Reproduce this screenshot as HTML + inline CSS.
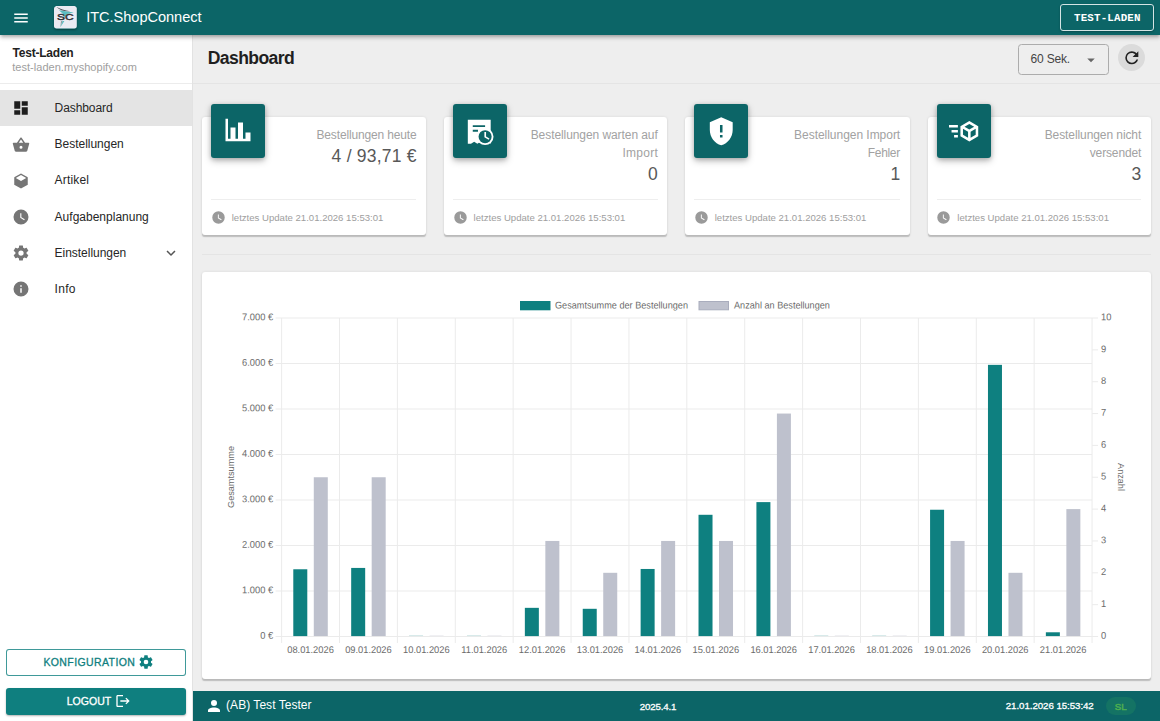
<!DOCTYPE html>
<html lang="de"><head><meta charset="utf-8"><title>ITC.ShopConnect - Dashboard</title>
<style>
html,body{margin:0;padding:0}
body{width:1160px;height:721px;overflow:hidden;position:relative;background:#eeeeee;font-family:"Liberation Sans",sans-serif;}
.abs{position:absolute}
.t{position:absolute;white-space:nowrap}
.ic{position:absolute;display:block}
.card{position:absolute;background:#fff;border-radius:3px;box-shadow:0 1.5px 1px -0.2px rgba(0,0,0,.17),0 0.5px 3px rgba(0,0,0,.09)}
.ibox{position:absolute;width:54px;height:54px;border-radius:3px;background:#0c6567;box-shadow:0 3px 7px rgba(0,0,0,.26),0 1px 4px rgba(0,0,0,.16)}
</style></head><body>

<div class="abs" id="sidebar" style="left:0;top:35px;width:192px;height:686px;background:#fff;box-shadow:1px 0 0 #e2e2e2"></div>
<div class="t" style="left:12.50px;top:45px;font-size:12px;line-height:17px;color:#222;font-weight:700;letter-spacing:-0.215px;">Test-Laden</div>
<div class="t" style="left:12.25px;top:60px;font-size:11px;line-height:15px;color:#9e9e9e;letter-spacing:0.030px;">test-laden.myshopify.com</div>
<div class="abs" style="left:0;top:83px;width:192px;height:1px;background:#ececec"></div>
<div class="abs" style="left:0;top:90px;width:192px;height:36px;background:#e4e4e4"></div>
<svg class="ic" style="left:12px;top:99.3px;width:18px;height:18px;" viewBox="0 0 24 24"><path fill="#1e1e1e" fill-rule="evenodd" d="M13,3V9H21V3M13,21H21V11H13M3,21H11V15H3M3,13H11V3H3V13Z"/></svg>
<div class="t" style="left:54.60px;top:100px;font-size:12px;line-height:17px;color:#262626;letter-spacing:-0.084px;">Dashboard</div>
<svg class="ic" style="left:12px;top:135.5px;width:18px;height:18px;" viewBox="0 0 24 24"><path fill="#757575" fill-rule="evenodd" d="M5.5,21C4.72,21 4.04,20.55 3.71,19.9V19.9L1.1,10.44L1,10A1,1 0 0,1 2,9H6.58L11.18,2.43C11.36,2.17 11.66,2 12,2C12.34,2 12.65,2.17 12.83,2.44L17.42,9H22A1,1 0 0,1 23,10L22.96,10.29L20.29,19.9C19.96,20.55 19.28,21 18.5,21H5.5M12,4.74L9,9H15L12,4.74M12,13A2,2 0 0,0 10,15A2,2 0 0,0 12,17A2,2 0 0,0 14,15A2,2 0 0,0 12,13Z"/></svg>
<div class="t" style="left:54.60px;top:136px;font-size:12px;line-height:17px;color:#262626;letter-spacing:-0.023px;">Bestellungen</div>
<svg class="ic" style="left:12px;top:171.7px;width:18px;height:18px;" viewBox="0 0 24 24"><path fill="#757575" fill-rule="evenodd" d="M21,16.5C21,16.88 20.79,17.21 20.47,17.38L12.57,21.82C12.41,21.94 12.21,22 12,22C11.79,22 11.59,21.94 11.43,21.82L3.53,17.38C3.21,17.21 3,16.88 3,16.5V7.5C3,7.12 3.21,6.79 3.53,6.62L11.43,2.18C11.59,2.06 11.79,2 12,2C12.21,2 12.41,2.06 12.57,2.18L20.47,6.62C20.79,6.79 21,7.12 21,7.5V16.5M12,4.15L5.04,8.07L12,11.99L18.96,8.07L12,4.15Z"/></svg>
<div class="t" style="left:54.60px;top:172px;font-size:12px;line-height:17px;color:#262626;letter-spacing:0.158px;">Artikel</div>
<svg class="ic" style="left:12px;top:207.9px;width:18px;height:18px;" viewBox="0 0 24 24"><path fill="#757575" fill-rule="evenodd" d="M12,2A10,10 0 0,0 2,12A10,10 0 0,0 12,22A10,10 0 0,0 22,12A10,10 0 0,0 12,2M16.2,16.2L11,13V7H12.5V12.2L17,14.9L16.2,16.2Z"/></svg>
<div class="t" style="left:54.60px;top:209px;font-size:12px;line-height:17px;color:#262626;letter-spacing:0.008px;">Aufgabenplanung</div>
<svg class="ic" style="left:12px;top:244.10000000000002px;width:18px;height:18px;" viewBox="0 0 24 24"><path fill="#757575" fill-rule="evenodd" d="M12,15.5A3.5,3.5 0 0,1 8.5,12A3.5,3.5 0 0,1 12,8.5A3.5,3.5 0 0,1 15.5,12A3.5,3.5 0 0,1 12,15.5M19.43,12.97C19.47,12.65 19.5,12.33 19.5,12C19.5,11.67 19.47,11.34 19.43,11L21.54,9.37C21.73,9.22 21.78,8.95 21.66,8.73L19.66,5.27C19.54,5.05 19.27,4.96 19.05,5.05L16.56,6.05C16.04,5.66 15.5,5.32 14.87,5.07L14.5,2.42C14.46,2.18 14.25,2 14,2H10C9.75,2 9.54,2.18 9.5,2.42L9.13,5.07C8.5,5.32 7.96,5.66 7.44,6.05L4.95,5.05C4.73,4.96 4.46,5.05 4.34,5.27L2.34,8.73C2.21,8.95 2.27,9.22 2.46,9.37L4.57,11C4.53,11.34 4.5,11.67 4.5,12C4.5,12.33 4.53,12.65 4.57,12.97L2.46,14.63C2.27,14.78 2.21,15.05 2.34,15.27L4.34,18.73C4.46,18.95 4.73,19.03 4.95,18.95L7.44,17.94C7.96,18.34 8.5,18.68 9.13,18.93L9.5,21.58C9.54,21.82 9.75,22 10,22H14C14.25,22 14.46,21.82 14.5,21.58L14.87,18.93C15.5,18.67 16.04,18.34 16.56,17.94L19.05,18.95C19.27,19.03 19.54,18.95 19.66,18.73L21.66,15.27C21.78,15.05 21.73,14.78 21.54,14.63L19.43,12.97Z"/></svg>
<div class="t" style="left:54.60px;top:245px;font-size:12px;line-height:17px;color:#262626;letter-spacing:-0.033px;">Einstellungen</div>
<svg class="ic" style="left:12px;top:280.3px;width:18px;height:18px;" viewBox="0 0 24 24"><path fill="#757575" fill-rule="evenodd" d="M13,9H11V7H13M13,17H11V11H13M12,2A10,10 0 0,0 2,12A10,10 0 0,0 12,22A10,10 0 0,0 22,12A10,10 0 0,0 12,2Z"/></svg>
<div class="t" style="left:54.60px;top:281px;font-size:12px;line-height:17px;color:#262626;letter-spacing:0.296px;">Info</div>
<svg class="ic" style="left:162px;top:244.1px;width:18px;height:18px;" viewBox="0 0 24 24"><path fill="#555" fill-rule="evenodd" d="M7.41,8.58L12,13.17L16.59,8.58L18,10L12,16L6,10L7.41,8.58Z"/></svg>
<div class="abs" style="left:6px;top:648.7px;width:178px;height:25.3px;border:1px solid rgba(15,127,127,.8);border-radius:3px;background:#fff"></div>
<div class="t" style="left:43.40px;top:655px;font-size:10.5px;line-height:15px;color:#0f7f7f;letter-spacing:0.398px;-webkit-text-stroke:0.3px currentColor;">KONFIGURATION</div>
<svg class="ic" style="left:138px;top:654.2px;width:16px;height:16px;" viewBox="0 0 24 24"><path fill="#0f7f7f" fill-rule="evenodd" d="M12,15.5A3.5,3.5 0 0,1 8.5,12A3.5,3.5 0 0,1 12,8.5A3.5,3.5 0 0,1 15.5,12A3.5,3.5 0 0,1 12,15.5M19.43,12.97C19.47,12.65 19.5,12.33 19.5,12C19.5,11.67 19.47,11.34 19.43,11L21.54,9.37C21.73,9.22 21.78,8.95 21.66,8.73L19.66,5.27C19.54,5.05 19.27,4.96 19.05,5.05L16.56,6.05C16.04,5.66 15.5,5.32 14.87,5.07L14.5,2.42C14.46,2.18 14.25,2 14,2H10C9.75,2 9.54,2.18 9.5,2.42L9.13,5.07C8.5,5.32 7.96,5.66 7.44,6.05L4.95,5.05C4.73,4.96 4.46,5.05 4.34,5.27L2.34,8.73C2.21,8.95 2.27,9.22 2.46,9.37L4.57,11C4.53,11.34 4.5,11.67 4.5,12C4.5,12.33 4.53,12.65 4.57,12.97L2.46,14.63C2.27,14.78 2.21,15.05 2.34,15.27L4.34,18.73C4.46,18.95 4.73,19.03 4.95,18.95L7.44,17.94C7.96,18.34 8.5,18.68 9.13,18.93L9.5,21.58C9.54,21.82 9.75,22 10,22H14C14.25,22 14.46,21.82 14.5,21.58L14.87,18.93C15.5,18.67 16.04,18.34 16.56,17.94L19.05,18.95C19.27,19.03 19.54,18.95 19.66,18.73L21.66,15.27C21.78,15.05 21.73,14.78 21.54,14.63L19.43,12.97Z"/></svg>
<div class="abs" style="left:6px;top:688px;width:180px;height:26.7px;border-radius:3px;background:#0f7f7f;box-shadow:0 1px 2px rgba(0,0,0,.3)"></div>
<div class="t" style="left:66.70px;top:694px;font-size:10.5px;line-height:15px;color:#fff;letter-spacing:0.032px;-webkit-text-stroke:0.3px currentColor;">LOGOUT</div>
<svg class="ic" style="left:114.5px;top:693.4px;width:16px;height:16px;" viewBox="0 0 24 24"><path fill="#fff" fill-rule="evenodd" d="M17 7L15.59 8.41L18.17 11H8V13H18.17L15.59 15.58L17 17L22 12M4 5H12V3H4C2.9 3 2 3.9 2 5V19C2 20.1 2.9 21 4 21H12V19H4V5Z"/></svg>
<div class="t" style="left:207.80px;top:46px;font-size:17.6px;line-height:25px;color:#1f1f1f;font-weight:700;letter-spacing:-0.628px;">Dashboard</div>
<div class="abs" style="left:193px;top:83.3px;width:967px;height:1px;background:#e4e4e4"></div>
<div class="abs" style="left:1018px;top:44px;width:89px;height:28.7px;border:1px solid #acacac;border-radius:3.5px;"></div>
<div class="t" style="left:1030.60px;top:51px;font-size:12px;line-height:17px;color:#444;letter-spacing:-0.182px;">60 Sek.</div>
<svg class="ic" style="left:1081.9px;top:50.6px;width:18px;height:18px;" viewBox="0 0 24 24"><path fill="#666" fill-rule="evenodd" d="M7,10L12,15L17,10H7Z"/></svg>
<div class="abs" style="left:1117.9px;top:44.2px;width:27px;height:27px;border-radius:50%;background:#dbdbdb"></div>
<svg class="ic" style="left:1121.8px;top:48.2px;width:19.6px;height:19.6px;" viewBox="0 0 24 24"><path fill="#222" fill-rule="evenodd" d="M17.65,6.35C16.2,4.9 14.21,4 12,4A8,8 0 0,0 4,12A8,8 0 0,0 12,20C15.73,20 18.84,17.45 19.73,14H17.65C16.83,16.33 14.61,18 12,18A6,6 0 0,1 6,12A6,6 0 0,1 12,6C13.66,6 15.14,6.69 16.22,7.78L13,11H20V4L17.65,6.35Z"/></svg>
<div class="card" style="left:202px;top:117.3px;width:224.10px;height:117.8px"></div>
<div class="ibox" style="left:211.20px;top:103.8px"></div>
<svg class="ic" style="left:222.79999999999998px;top:115.4px;width:30.0px;height:30.0px;" viewBox="0 0 24 24"><path fill="#fff" fill-rule="evenodd" d="M22,21H2V3H4V19H6V10H10V19H12V6H16V19H18V14H22V21Z"/></svg>
<div class="t" style="right:743.55px;top:127px;font-size:12px;line-height:17px;color:#a2a2a2;letter-spacing:-0.155px;">Bestellungen heute</div>
<div class="t" style="right:743.17px;top:144px;font-size:17.5px;line-height:24px;color:#585858;letter-spacing:0.230px;">4 / 93,71 €</div>
<div class="abs" style="left:211.20px;top:198.5px;width:205.30px;height:1px;background:#eee"></div>
<svg class="ic" style="left:210.65px;top:210.2px;width:15px;height:15px;" viewBox="0 0 24 24"><path fill="#9a9a9a" fill-rule="evenodd" d="M12,2A10,10 0 0,0 2,12A10,10 0 0,0 12,22A10,10 0 0,0 22,12A10,10 0 0,0 12,2M16.2,16.2L11,13V7H12.5V12.2L17,14.9L16.2,16.2Z"/></svg>
<div class="t" style="left:231.70px;top:211px;font-size:9.6px;line-height:13px;color:#9e9e9e;letter-spacing:-0.010px;">letztes Update 21.01.2026 15:53:01</div>
<div class="card" style="left:443.9px;top:117.3px;width:223.40px;height:117.8px"></div>
<div class="ibox" style="left:453.10px;top:103.8px"></div>
<svg class="ic" style="left:464.15px;top:115.55px;width:30.5px;height:30.5px" viewBox="0 0 24 24"><path fill="#fff" fill-rule="evenodd" d="M3,3H21V21.8L18,20.2L15.5,21.8L13,20.2L10.5,21.8L8,20.2L5.5,21.8L3,21.8ZM6.9,7.2H16.6V8.7H6.9ZM6.9,10.8H11V12.4H6.9Z"/><circle cx="16.6" cy="16.3" r="6.6" fill="#fff"/><circle cx="16.6" cy="16.3" r="5.15" fill="#0c6567"/><path fill="#fff" d="M16.05,12.6h1.3v3.5l2.7,1.6l-0.65,1.05l-3.35,-2z"/></svg>
<div class="t" style="right:502.27px;top:127px;font-size:12px;line-height:17px;color:#a2a2a2;letter-spacing:-0.074px;">Bestellungen warten auf</div>
<div class="t" style="right:501.92px;top:145px;font-size:12px;line-height:17px;color:#a2a2a2;letter-spacing:0.281px;">Import</div>
<div class="t" style="right:502.20px;top:162px;font-size:17.5px;line-height:24px;color:#585858;">0</div>
<div class="abs" style="left:453.10px;top:198.5px;width:204.60px;height:1px;background:#eee"></div>
<svg class="ic" style="left:452.54999999999995px;top:210.2px;width:15px;height:15px;" viewBox="0 0 24 24"><path fill="#9a9a9a" fill-rule="evenodd" d="M12,2A10,10 0 0,0 2,12A10,10 0 0,0 12,22A10,10 0 0,0 22,12A10,10 0 0,0 12,2M16.2,16.2L11,13V7H12.5V12.2L17,14.9L16.2,16.2Z"/></svg>
<div class="t" style="left:473.60px;top:211px;font-size:9.6px;line-height:13px;color:#9e9e9e;letter-spacing:-0.010px;">letztes Update 21.01.2026 15:53:01</div>
<div class="card" style="left:685.0px;top:117.3px;width:224.70px;height:117.8px"></div>
<div class="ibox" style="left:694.20px;top:103.8px"></div>
<svg class="ic" style="left:705.95px;top:115.55000000000001px;width:30.5px;height:30.5px;" viewBox="0 0 24 24"><path fill="#fff" fill-rule="evenodd" d="M12,1L3,5V11C3,16.55 6.84,21.74 12,23C17.16,21.74 21,16.55 21,11V5M11,7H13V13H11M11,15H13V17H11"/></svg>
<div class="t" style="right:259.84px;top:127px;font-size:12px;line-height:17px;color:#a2a2a2;letter-spacing:-0.035px;">Bestellungen Import</div>
<div class="t" style="right:260.13px;top:145px;font-size:12px;line-height:17px;color:#a2a2a2;letter-spacing:-0.331px;">Fehler</div>
<div class="t" style="right:259.80px;top:162px;font-size:17.5px;line-height:24px;color:#585858;">1</div>
<div class="abs" style="left:694.20px;top:198.5px;width:205.90px;height:1px;background:#eee"></div>
<svg class="ic" style="left:693.65px;top:210.2px;width:15px;height:15px;" viewBox="0 0 24 24"><path fill="#9a9a9a" fill-rule="evenodd" d="M12,2A10,10 0 0,0 2,12A10,10 0 0,0 12,22A10,10 0 0,0 22,12A10,10 0 0,0 12,2M16.2,16.2L11,13V7H12.5V12.2L17,14.9L16.2,16.2Z"/></svg>
<div class="t" style="left:714.70px;top:211px;font-size:9.6px;line-height:13px;color:#9e9e9e;letter-spacing:-0.010px;">letztes Update 21.01.2026 15:53:01</div>
<div class="card" style="left:927.6px;top:117.3px;width:223.20px;height:117.8px"></div>
<div class="ibox" style="left:936.80px;top:103.8px"></div>
<svg class="ic" style="left:948.5500000000001px;top:115.55000000000001px;width:30.5px;height:30.5px;" viewBox="0 0 24 24"><path fill="#fff" fill-rule="evenodd" d="M16,4L9,8.04V15.96L16,20L23,15.96V8.04M16,6.31L19.8,8.5L16,10.69L12.21,8.5M0,7V9H7V7M11,10.11L15,12.42V17.11L11,14.81M21,10.11V14.81L17,17.11V12.42M2,11V13H7V11M4,15V17H7V15"/></svg>
<div class="t" style="right:18.79px;top:127px;font-size:12px;line-height:17px;color:#a2a2a2;letter-spacing:-0.085px;">Bestellungen nicht</div>
<div class="t" style="right:18.84px;top:145px;font-size:12px;line-height:17px;color:#a2a2a2;letter-spacing:-0.143px;">versendet</div>
<div class="t" style="right:18.70px;top:162px;font-size:17.5px;line-height:24px;color:#585858;">3</div>
<div class="abs" style="left:936.80px;top:198.5px;width:204.40px;height:1px;background:#eee"></div>
<svg class="ic" style="left:936.25px;top:210.2px;width:15px;height:15px;" viewBox="0 0 24 24"><path fill="#9a9a9a" fill-rule="evenodd" d="M12,2A10,10 0 0,0 2,12A10,10 0 0,0 12,22A10,10 0 0,0 22,12A10,10 0 0,0 12,2M16.2,16.2L11,13V7H12.5V12.2L17,14.9L16.2,16.2Z"/></svg>
<div class="t" style="left:957.30px;top:211px;font-size:9.6px;line-height:13px;color:#9e9e9e;letter-spacing:-0.010px;">letztes Update 21.01.2026 15:53:01</div>
<div class="abs" style="left:202px;top:253.6px;width:948.8px;height:1px;background:#e4e4e4"></div>
<div class="card" style="left:202px;top:272.1px;width:948.8px;height:406.5px"></div>
<svg class="abs" style="left:0;top:0" width="1160" height="721" viewBox="0 0 1160 721" font-family="Liberation Sans, sans-serif" font-size="9.8" fill="#6b6b6b">
<rect x="275.60" y="636.00" width="816.45" height="1" fill="#ebebeb"/>
<text transform="translate(273.10,638.80) rotate(0.03) scale(0.951,1)" text-anchor="end">0 €</text>
<rect x="275.60" y="590.50" width="816.45" height="1" fill="#ebebeb"/>
<text transform="translate(273.10,593.30) rotate(0.03) scale(0.951,1)" text-anchor="end">1.000 €</text>
<rect x="275.60" y="545.00" width="816.45" height="1" fill="#ebebeb"/>
<text transform="translate(273.10,547.80) rotate(0.03) scale(0.951,1)" text-anchor="end">2.000 €</text>
<rect x="275.60" y="499.50" width="816.45" height="1" fill="#ebebeb"/>
<text transform="translate(273.10,502.30) rotate(0.03) scale(0.951,1)" text-anchor="end">3.000 €</text>
<rect x="275.60" y="454.00" width="816.45" height="1" fill="#ebebeb"/>
<text transform="translate(273.10,456.80) rotate(0.03) scale(0.951,1)" text-anchor="end">4.000 €</text>
<rect x="275.60" y="408.50" width="816.45" height="1" fill="#ebebeb"/>
<text transform="translate(273.10,411.30) rotate(0.03) scale(0.951,1)" text-anchor="end">5.000 €</text>
<rect x="275.60" y="363.00" width="816.45" height="1" fill="#ebebeb"/>
<text transform="translate(273.10,365.80) rotate(0.03) scale(0.951,1)" text-anchor="end">6.000 €</text>
<rect x="275.60" y="317.50" width="816.45" height="1" fill="#ebebeb"/>
<text transform="translate(273.10,320.30) rotate(0.03) scale(0.951,1)" text-anchor="end">7.000 €</text>
<rect x="281.10" y="318.00" width="1" height="325.00" fill="#ebebeb"/>
<rect x="338.99" y="318.00" width="1" height="325.00" fill="#ebebeb"/>
<rect x="396.88" y="318.00" width="1" height="325.00" fill="#ebebeb"/>
<rect x="454.77" y="318.00" width="1" height="325.00" fill="#ebebeb"/>
<rect x="512.66" y="318.00" width="1" height="325.00" fill="#ebebeb"/>
<rect x="570.55" y="318.00" width="1" height="325.00" fill="#ebebeb"/>
<rect x="628.44" y="318.00" width="1" height="325.00" fill="#ebebeb"/>
<rect x="686.33" y="318.00" width="1" height="325.00" fill="#ebebeb"/>
<rect x="744.21" y="318.00" width="1" height="325.00" fill="#ebebeb"/>
<rect x="802.10" y="318.00" width="1" height="325.00" fill="#ebebeb"/>
<rect x="859.99" y="318.00" width="1" height="325.00" fill="#ebebeb"/>
<rect x="917.88" y="318.00" width="1" height="325.00" fill="#ebebeb"/>
<rect x="975.77" y="318.00" width="1" height="325.00" fill="#ebebeb"/>
<rect x="1033.66" y="318.00" width="1" height="325.00" fill="#ebebeb"/>
<rect x="1091.55" y="318.00" width="1" height="325.00" fill="#ebebeb"/>
<rect x="1092.05" y="636.00" width="6" height="1" fill="#ebebeb"/>
<text transform="translate(1101.05,638.80) rotate(0.03) scale(0.951,1)">0</text>
<rect x="1092.05" y="604.15" width="6" height="1" fill="#ebebeb"/>
<text transform="translate(1101.05,606.95) rotate(0.03) scale(0.951,1)">1</text>
<rect x="1092.05" y="572.30" width="6" height="1" fill="#ebebeb"/>
<text transform="translate(1101.05,575.10) rotate(0.03) scale(0.951,1)">2</text>
<rect x="1092.05" y="540.45" width="6" height="1" fill="#ebebeb"/>
<text transform="translate(1101.05,543.25) rotate(0.03) scale(0.951,1)">3</text>
<rect x="1092.05" y="508.60" width="6" height="1" fill="#ebebeb"/>
<text transform="translate(1101.05,511.40) rotate(0.03) scale(0.951,1)">4</text>
<rect x="1092.05" y="476.75" width="6" height="1" fill="#ebebeb"/>
<text transform="translate(1101.05,479.55) rotate(0.03) scale(0.951,1)">5</text>
<rect x="1092.05" y="444.90" width="6" height="1" fill="#ebebeb"/>
<text transform="translate(1101.05,447.70) rotate(0.03) scale(0.951,1)">6</text>
<rect x="1092.05" y="413.05" width="6" height="1" fill="#ebebeb"/>
<text transform="translate(1101.05,415.85) rotate(0.03) scale(0.951,1)">7</text>
<rect x="1092.05" y="381.20" width="6" height="1" fill="#ebebeb"/>
<text transform="translate(1101.05,384.00) rotate(0.03) scale(0.951,1)">8</text>
<rect x="1092.05" y="349.35" width="6" height="1" fill="#ebebeb"/>
<text transform="translate(1101.05,352.15) rotate(0.03) scale(0.951,1)">9</text>
<rect x="1092.05" y="317.50" width="6" height="1" fill="#ebebeb"/>
<text transform="translate(1101.05,320.30) rotate(0.03) scale(0.951,1)">10</text>
<text transform="translate(310.54,653.00) rotate(0.03) scale(0.951,1)" text-anchor="middle">08.01.2026</text>
<rect x="293.29" y="569.27" width="14.0" height="66.83" fill="#0e8080"/>
<rect x="313.79" y="477.25" width="14.0" height="158.85" fill="#bec1cd"/>
<text transform="translate(368.43,653.00) rotate(0.03) scale(0.951,1)" text-anchor="middle">09.01.2026</text>
<rect x="351.18" y="567.93" width="14.0" height="68.17" fill="#0e8080"/>
<rect x="371.68" y="477.25" width="14.0" height="158.85" fill="#bec1cd"/>
<text transform="translate(426.32,653.00) rotate(0.03) scale(0.951,1)" text-anchor="middle">10.01.2026</text>
<rect x="409.07" y="635.20" width="14.0" height="0.9" fill="#cfe5e5"/>
<rect x="429.57" y="635.20" width="14.0" height="0.9" fill="#ededf0"/>
<text transform="translate(484.21,653.00) rotate(0.03) scale(0.951,1)" text-anchor="middle">11.01.2026</text>
<rect x="466.96" y="635.20" width="14.0" height="0.9" fill="#cfe5e5"/>
<rect x="487.46" y="635.20" width="14.0" height="0.9" fill="#ededf0"/>
<text transform="translate(542.10,653.00) rotate(0.03) scale(0.951,1)" text-anchor="middle">12.01.2026</text>
<rect x="524.85" y="607.84" width="14.0" height="28.26" fill="#0e8080"/>
<rect x="545.35" y="540.95" width="14.0" height="95.15" fill="#bec1cd"/>
<text transform="translate(599.99,653.00) rotate(0.03) scale(0.951,1)" text-anchor="middle">13.01.2026</text>
<rect x="582.74" y="608.80" width="14.0" height="27.30" fill="#0e8080"/>
<rect x="603.24" y="572.80" width="14.0" height="63.30" fill="#bec1cd"/>
<text transform="translate(657.88,653.00) rotate(0.03) scale(0.951,1)" text-anchor="middle">14.01.2026</text>
<rect x="640.63" y="568.97" width="14.0" height="67.13" fill="#0e8080"/>
<rect x="661.13" y="540.95" width="14.0" height="95.15" fill="#bec1cd"/>
<text transform="translate(715.77,653.00) rotate(0.03) scale(0.951,1)" text-anchor="middle">15.01.2026</text>
<rect x="698.52" y="514.79" width="14.0" height="121.31" fill="#0e8080"/>
<rect x="719.02" y="540.95" width="14.0" height="95.15" fill="#bec1cd"/>
<text transform="translate(773.66,653.00) rotate(0.03) scale(0.951,1)" text-anchor="middle">16.01.2026</text>
<rect x="756.41" y="502.11" width="14.0" height="133.99" fill="#0e8080"/>
<rect x="776.91" y="413.55" width="14.0" height="222.55" fill="#bec1cd"/>
<text transform="translate(831.55,653.00) rotate(0.03) scale(0.951,1)" text-anchor="middle">17.01.2026</text>
<rect x="814.30" y="635.20" width="14.0" height="0.9" fill="#cfe5e5"/>
<rect x="834.80" y="635.20" width="14.0" height="0.9" fill="#ededf0"/>
<text transform="translate(889.44,653.00) rotate(0.03) scale(0.951,1)" text-anchor="middle">18.01.2026</text>
<rect x="872.19" y="635.20" width="14.0" height="0.9" fill="#cfe5e5"/>
<rect x="892.69" y="635.20" width="14.0" height="0.9" fill="#ededf0"/>
<text transform="translate(947.33,653.00) rotate(0.03) scale(0.951,1)" text-anchor="middle">19.01.2026</text>
<rect x="930.08" y="509.74" width="14.0" height="126.36" fill="#0e8080"/>
<rect x="950.58" y="540.95" width="14.0" height="95.15" fill="#bec1cd"/>
<text transform="translate(1005.22,653.00) rotate(0.03) scale(0.951,1)" text-anchor="middle">20.01.2026</text>
<rect x="987.97" y="364.85" width="14.0" height="271.25" fill="#0e8080"/>
<rect x="1008.47" y="572.80" width="14.0" height="63.30" fill="#bec1cd"/>
<text transform="translate(1063.11,653.00) rotate(0.03) scale(0.951,1)" text-anchor="middle">21.01.2026</text>
<rect x="1045.86" y="632.28" width="14.0" height="3.82" fill="#0e8080"/>
<rect x="1066.36" y="509.10" width="14.0" height="127.00" fill="#bec1cd"/>
<rect x="520" y="301" width="30.5" height="9.3" fill="#0e8080"/>
<text transform="translate(555.00,308.40) rotate(0.03) scale(0.932,1)">Gesamtsumme der Bestellungen</text>
<rect x="699" y="301.5" width="29.5" height="8.3" fill="#bec1cd" stroke="#a9adbd" stroke-width="1"/>
<text transform="translate(734.00,308.40) rotate(0.03) scale(0.932,1)">Anzahl an Bestellungen</text>
<text transform="translate(234.30,477.00) rotate(-90) scale(0.963,1)" text-anchor="middle" font-size="9.5">Gesamtsumme</text>
<text transform="translate(1118.00,477.00) rotate(90) scale(0.963,1)" text-anchor="middle" font-size="9.5">Anzahl</text>
</svg>
<div class="abs" style="left:192.5px;top:690.6px;width:968px;height:31px;background:#0c6567"></div>
<svg class="ic" style="left:204.8px;top:697px;width:18px;height:18px;" viewBox="0 0 24 24"><path fill="#fff" fill-rule="evenodd" d="M12,4A4,4 0 0,1 16,8A4,4 0 0,1 12,12A4,4 0 0,1 8,8A4,4 0 0,1 12,4M12,14C16.42,14 20,15.79 20,18V20H4V18C4,15.79 7.58,14 12,14Z"/></svg>
<div class="t" style="left:226.10px;top:697px;font-size:12px;line-height:17px;color:#fff;letter-spacing:0.032px;">(AB) Test Tester</div>
<div class="t" style="left:358.07px;width:600px;text-align:center;top:700px;font-size:9.7px;line-height:14px;color:#fff;letter-spacing:-0.152px;-webkit-text-stroke:0.3px currentColor;">2025.4.1</div>
<div class="t" style="right:66.30px;top:699px;font-size:9.7px;line-height:14px;color:#fff;letter-spacing:-0.050px;-webkit-text-stroke:0.3px currentColor;">21.01.2026 15:53:42</div>
<div class="abs" style="left:1106px;top:696.6px;width:29.6px;height:18.2px;border-radius:9.1px;background:#147364"></div>
<div class="t" style="left:820.67px;width:600px;text-align:center;top:700px;font-size:9.7px;line-height:14px;color:#4caf50;letter-spacing:0.037px;-webkit-text-stroke:0.5px currentColor;">SL</div>
<div class="abs" style="left:0;top:0;width:1160px;height:35.25px;background:#0c6567;box-shadow:0 1.5px 3px -0.75px rgba(0,0,0,.2),0 3px 3.75px rgba(0,0,0,.14),0 0.75px 7.5px rgba(0,0,0,.12)"></div>
<svg class="ic" style="left:12px;top:8.5px;width:18px;height:18px;" viewBox="0 0 24 24"><path fill="#fff" fill-rule="evenodd" d="M3,6H21V8H3V6M3,11H21V13H3V11M3,16H21V18H3V16Z"/></svg>
<svg class="ic" style="left:54.1px;top:6px;width:22.8px;height:22.5px;border-radius:2.5px;box-shadow:0 1px 2px rgba(0,0,0,.35)" viewBox="0 0 22.8 22.5">
<rect width="22.8" height="22.5" rx="2.5" fill="#ebebf3"/>
<path d="M5.0,4.3 L19.8,6.6 L13.2,8.0 L10.6,11.0 L8.6,15.2 L9.6,8.4 Z" fill="#5bbcc0"/>
<path d="M2.3,0.8 Q7.8,4.2 16.2,5.2 Q7.6,6.0 2.3,0.8 Z" fill="#4a4f55"/>
<path d="M7.0,15.0 L8.6,15.0 L6.3,21.2 Z" fill="#9a9ea3"/>
<path d="M8.6,15.0 L10.4,15.1 L6.3,21.2 Z" fill="#5bbcc0"/>
<text x="3.0" y="14.2" font-family="Liberation Sans, sans-serif" font-weight="400" font-size="9.2" fill="#2f3033" stroke="#2f3033" stroke-width="0.45" textLength="16.6" lengthAdjust="spacingAndGlyphs">SC</text>
</svg>
<div class="t" style="left:86.20px;top:7px;font-size:14.6px;line-height:20px;color:#fff;letter-spacing:-0.047px;">ITC.ShopConnect</div>
<div class="abs" style="left:1060px;top:3.5px;width:92px;height:25.5px;border:1px solid #d4e4e4;border-radius:3px;box-shadow:0 1px 2px rgba(0,0,0,.25)"></div>
<div class="t" style="left:1074.00px;top:11px;font-size:10.8px;line-height:15px;color:#fff;font-weight:700;letter-spacing:0.188px;font-family:'Liberation Mono',monospace;">TEST-LADEN</div>
</body></html>
